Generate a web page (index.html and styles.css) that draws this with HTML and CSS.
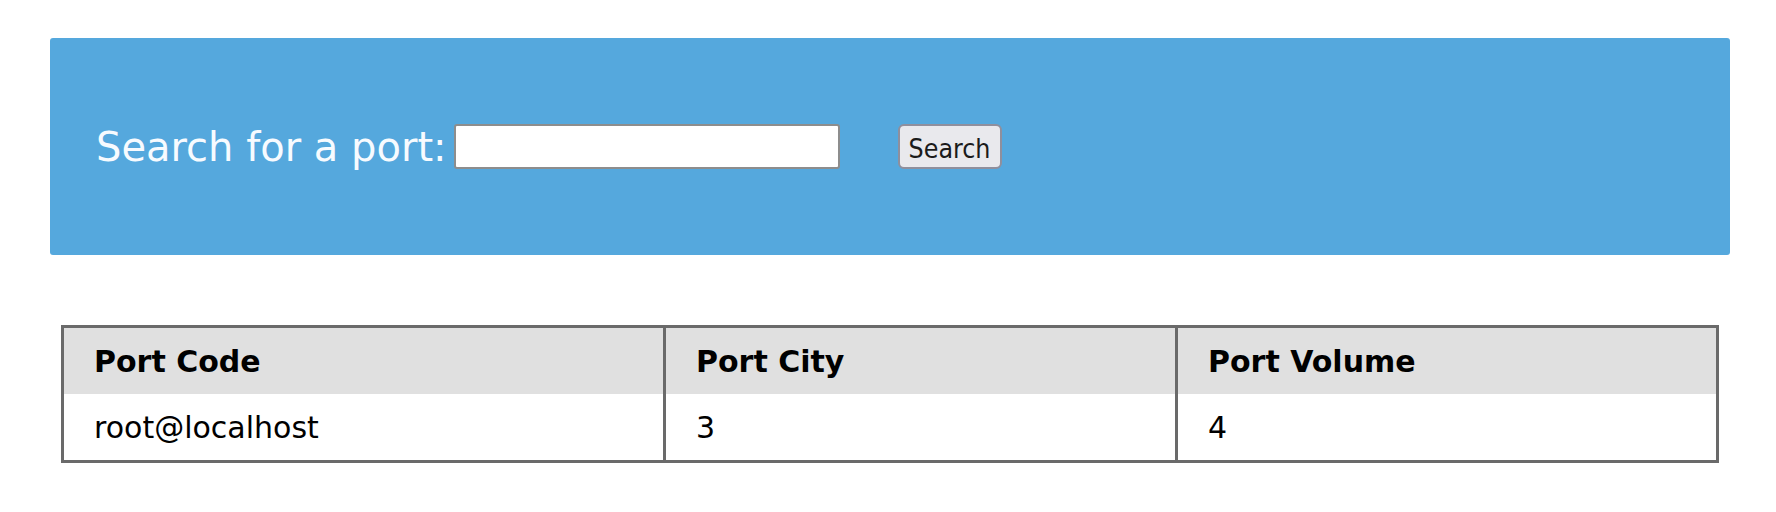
FILE: index.html
```html
<!DOCTYPE html>
<html lang="en">
<head>
<meta charset="utf-8">
<title>Port Search</title>
<link rel="stylesheet" href="styles.css">
</head>
<body>
<div class="page">
  <form class="search-panel" onsubmit="return false;">
    <label class="search-label" for="port">Search for a port:</label>
    <input class="search-input" id="port" type="text">
    <button class="search-btn" type="submit">Search</button>
  </form>
  <table class="ports">
    <thead>
      <tr>
        <th class="col-code">Port Code</th>
        <th class="col-city">Port City</th>
        <th class="col-volume">Port Volume</th>
      </tr>
    </thead>
    <tbody>
      <tr>
        <td>root@localhost</td>
        <td>3</td>
        <td>4</td>
      </tr>
    </tbody>
  </table>
</div>
</body>
</html>
```
FILE: styles.css
```css
html, body {
  margin: 0;
  padding: 0;
  background: #ffffff;
}

body {
  font-family: "DejaVu Sans", "Liberation Sans", sans-serif;
  color: #000;
}

.page {
  padding: 38px 46px 0 50px;
  display: flex;
  flex-direction: column;
  gap: 70px;
}

.search-panel {
  margin: 0;
  height: 217px;
  background: #55a8dd;
  border-radius: 3px;
  display: flex;
  align-items: center;
  padding: 0 0 0 46px;
}

.search-label {
  font-size: 40px;
  color: #f7fbff;
  margin-right: 7px;
  line-height: 1;
}

.search-input {
  width: 386px;
  height: 45px;
  box-sizing: border-box;
  border: 2px solid #8d8d8d;
  border-radius: 3px;
  background: #fff;
  margin: 0 58px 0 0;
  padding: 0 6px;
  font-size: 24px;
}

.search-btn {
  height: 45px;
  width: 104px;
  box-sizing: border-box;
  background: #e9e9ed;
  border: 2px solid #8f8f9d;
  border-radius: 6px;
  font-family: "DejaVu Sans Condensed", "DejaVu Sans", sans-serif;
  font-stretch: condensed;
  font-size: 26.5px;
  color: #1b1b1b;
  padding: 3px 0 0;
}

.ports {
  margin-left: 11px;
  width: 1658px;
  border-collapse: collapse;
  border: 3px solid #6a6a6a;
  font-size: 30px;
}

.ports th,
.ports td {
  text-align: left;
  padding: 0 0 0 30px;
  border-left: 3px solid #6a6a6a;
  border-right: 3px solid #6a6a6a;
}

.ports th {
  background: #e0e0e0;
  font-weight: bold;
  height: 66px;
}

.ports td {
  background: #fff;
  height: 66px;
}

.col-code { width: 569px; }
.col-city { width: 479px; }
```
